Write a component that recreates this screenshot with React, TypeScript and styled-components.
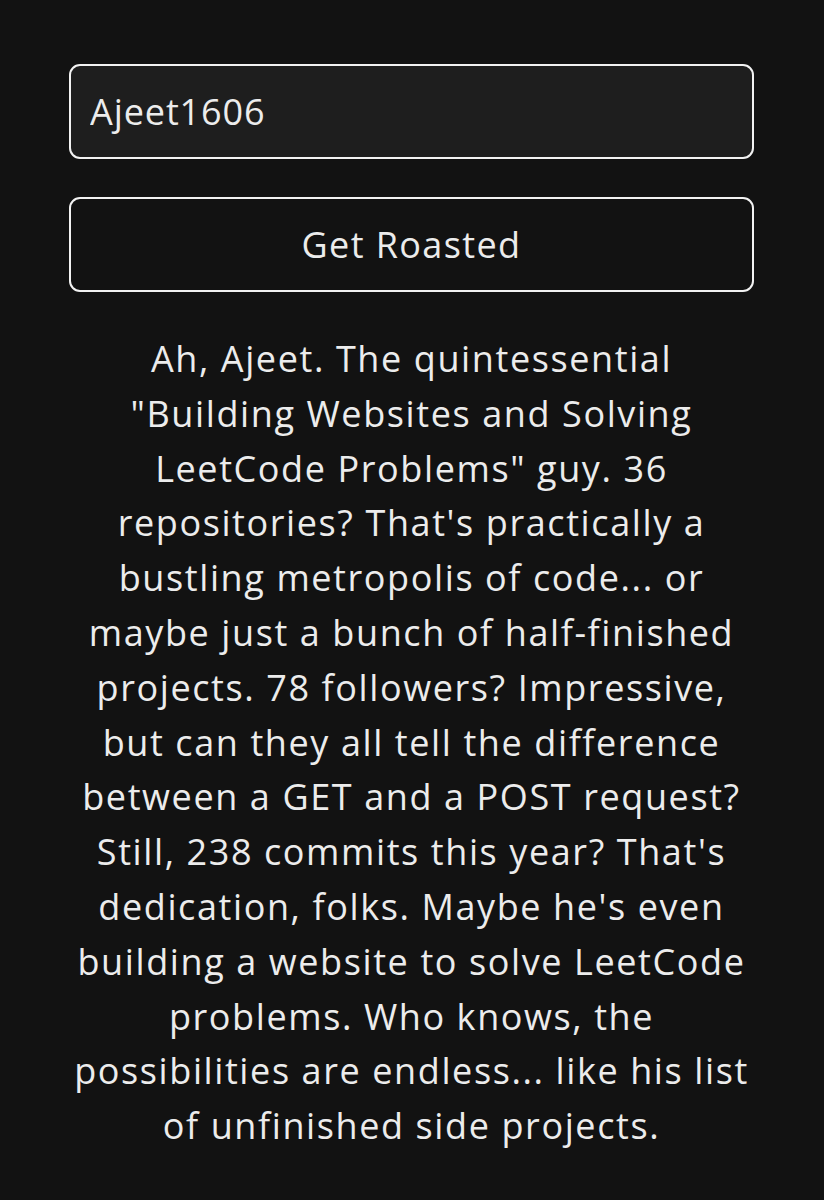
import React from 'react';
import styled, { createGlobalStyle } from 'styled-components';

const GlobalStyle = createGlobalStyle`
  html, body {
    margin: 0;
    padding: 0;
    background: #121212;
  }
  body {
    font-family: 'Open Sans', 'Liberation Sans', sans-serif;
    color: #ececec;
  }
`;

const roastLines = [
    'Ah, Ajeet. The quintessential',
    '"Building Websites and Solving',
    'LeetCode Problems" guy. 36',
    "repositories? That's practically a",
    'bustling metropolis of code... or',
    'maybe just a bunch of half-finished',
    'projects. 78 followers? Impressive,',
    'but can they all tell the difference',
    'between a GET and a POST request?',
    "Still, 238 commits this year? That's",
    "dedication, folks. Maybe he's even",
    'building a website to solve LeetCode',
    'problems. Who knows, the',
    'possibilities are endless... like his list',
    'of unfinished side projects.',
];

export default function App() {
    return (
        <>
            <GlobalStyle />
            <Page>
                <UserInput defaultValue="Ajeet1606" />
                <RoastButton>Get Roasted</RoastButton>
                <Roast>
                    {roastLines.map((line) => (
                        <RoastLine key={line}>{line}</RoastLine>
                    ))}
                </Roast>
            </Page>
        </>
    );
}

const Page = styled.main`
    display: flex;
    flex-direction: column;
    align-items: stretch;
    gap: 38px;
    padding: 64px 70px 40px 69px;
    min-height: 1200px;
    box-sizing: border-box;
`;

const UserInput = styled.input`
    height: 95px;
    box-sizing: border-box;
    background: #1e1e1e;
    border: 2px solid #f2f2f2;
    border-radius: 11px;
    padding: 0 19px;
    color: #ececec;
    font-family: 'Open Sans', 'Liberation Sans', sans-serif;
    font-weight: 400;
    font-size: 36px;
    letter-spacing: 0.9px;
    outline: none;
`;

const RoastButton = styled.button`
    height: 95px;
    box-sizing: border-box;
    background: #121212;
    border: 2px solid #f2f2f2;
    border-radius: 11px;
    color: #ececec;
    font-family: 'Open Sans', 'Liberation Sans', sans-serif;
    font-weight: 400;
    font-size: 36px;
    letter-spacing: 1.4px;
    cursor: pointer;
`;

const Roast = styled.p`
    margin: 2px -10px 0;
    text-align: center;
    font-weight: 400;
    font-size: 36px;
    line-height: 54.8px;
    letter-spacing: 1.6px;
`;

const RoastLine = styled.span`
    display: block;
    white-space: nowrap;
`;
